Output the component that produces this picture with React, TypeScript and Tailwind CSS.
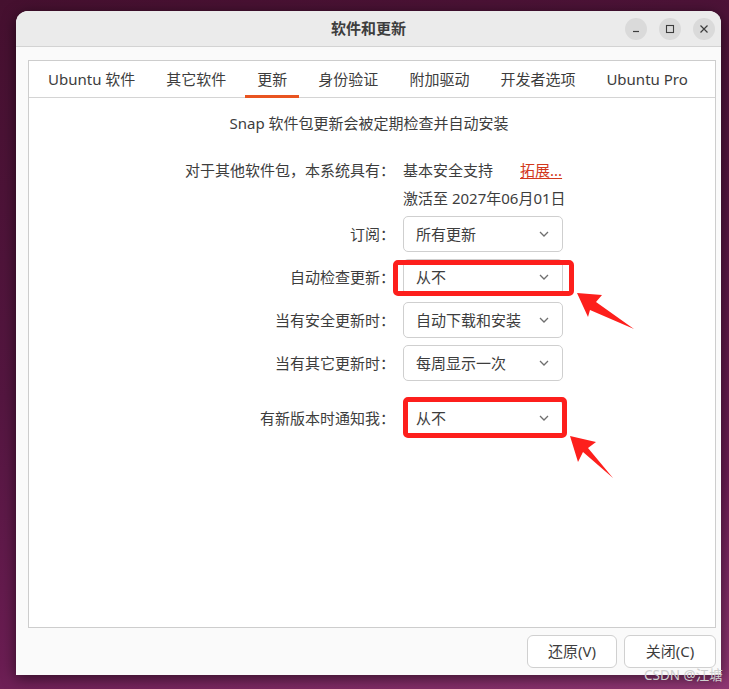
import React from 'react';

const font = {
  fontFamily: '"Noto Sans", "Noto Sans CJK SC", sans-serif',
};

const tabs = ['Ubuntu 软件', '其它软件', '更新', '身份验证', '附加驱动', '开发者选项', 'Ubuntu Pro'];

function Chevron() {
  return (
    <svg width="12" height="8" viewBox="0 0 12 8" className="text-[#6f6f6f]">
      <path d="M2 2l4 4 4-4" fill="none" stroke="currentColor" strokeWidth="1.3" />
    </svg>
  );
}

function Combo({ value }: { value: string }) {
  return (
    <div className="w-[160px] h-[36px] flex items-center justify-between pl-[12px] pr-[12px] bg-white border border-[#cfcfcf] rounded-[5px]">
      <span>{value}</span>
      <Chevron />
    </div>
  );
}

function Row({ label, children, className = '' }: { label: string; children: React.ReactNode; className?: string }) {
  return (
    <div className={`flex items-center ${className}`}>
      <div className="w-[366px] text-right">{label}</div>
      <div className="ml-[8px]">{children}</div>
    </div>
  );
}

export default function App() {
  return (
    <div
      className="relative w-[729px] h-[689px] overflow-hidden pt-[11px] pl-[16px] bg-[linear-gradient(165deg,#45102f_0%,#541640_45%,#6a1d52_75%,#8e3672_100%)] text-[#3d3d3d] text-[15px]"
      style={font}
    >
      <div className="w-[705px] h-[664px] flex flex-col rounded-t-[12px] bg-[#fafafa] shadow-[0_3px_14px_rgba(0,0,0,0.55)]">
        {/* title bar */}
        <div className="h-[36px] shrink-0 grid grid-cols-[1fr_auto_1fr] items-center bg-[#ebebeb] rounded-t-[12px] border-b border-[#d3d3d3]">
          <div />
          <div className="font-bold">软件和更新</div>
          <div className="flex justify-end items-center gap-[12px] pr-[6px]">
            <span className="w-[22px] h-[22px] rounded-full bg-[#dadada] flex items-center justify-center">
              <svg width="10" height="10" viewBox="0 0 10 10">
                <path d="M2 7.5h6" stroke="#3d3d3d" strokeWidth="1.2" />
              </svg>
            </span>
            <span className="w-[22px] h-[22px] rounded-full bg-[#dadada] flex items-center justify-center">
              <svg width="10" height="10" viewBox="0 0 10 10">
                <rect x="1.5" y="1.5" width="7" height="7" fill="none" stroke="#3d3d3d" strokeWidth="1.1" />
              </svg>
            </span>
            <span className="w-[22px] h-[22px] rounded-full bg-[#dadada] flex items-center justify-center">
              <svg width="10" height="10" viewBox="0 0 10 10">
                <path d="M1.5 1.5l7 7M8.5 1.5l-7 7" stroke="#3d3d3d" strokeWidth="1.2" />
              </svg>
            </span>
          </div>
        </div>

        {/* body */}
        <div className="flex-1 flex flex-col pl-[12px] pr-[5px] pt-[13px] pb-[7px]">
          <div className="flex-1 flex flex-col bg-white border border-[#cdcdcd]">
            <div className="h-[37px] shrink-0 flex items-stretch pl-[7px] gap-[7px] border-b border-[#d4d4d4]">
              {tabs.map((t) => (
                <div key={t} className="relative flex items-center px-[12px]">
                  {t}
                  {t === '更新' && (
                    <span className="absolute left-0 right-0 bottom-[-1px] h-[3px] bg-[#e95420]" />
                  )}
                </div>
              ))}
            </div>

            <div className="flex flex-col">
              <div className="mt-[15px] leading-[20px] text-center pr-[6px]">Snap 软件包更新会被定期检查并自动安装</div>

              <Row label="对于其他软件包，本系统具有：" className="mt-[27px] leading-[20px]">
                <div className="flex">
                  <span>基本安全支持</span>
                  <span className="ml-[27px] text-[#d2381d] underline underline-offset-2">拓展...</span>
                </div>
              </Row>
              <Row label="" className="mt-[8px] leading-[20px]">
                激活至 2027年06月01日
              </Row>

              <Row label="订阅：" className="mt-[8px]">
                <Combo value="所有更新" />
              </Row>
              <Row label="自动检查更新：" className="mt-[7px]">
                <Combo value="从不" />
              </Row>
              <Row label="当有安全更新时：" className="mt-[7px]">
                <Combo value="自动下载和安装" />
              </Row>
              <Row label="当有其它更新时：" className="mt-[7px]">
                <Combo value="每周显示一次" />
              </Row>
              <Row label="有新版本时通知我：" className="mt-[19px]">
                <Combo value="从不" />
              </Row>
            </div>
          </div>

          <div className="shrink-0 flex justify-end gap-[7px] mt-[7px]">
            <button className="w-[90px] h-[33px] bg-white border border-[#d0d0d0] rounded-[6px]">还原(V)</button>
            <button className="w-[92px] h-[33px] bg-white border border-[#d0d0d0] rounded-[6px]">关闭(C)</button>
          </div>
        </div>
      </div>

      {/* annotations */}
      <div className="absolute left-[393px] top-[260px] w-[181px] h-[36px] border-[5px] border-[#fd1f1c] rounded-[5px]" />
      <div className="absolute left-[403px] top-[397px] w-[164px] h-[41px] border-[5px] border-[#fd1f1c] rounded-[5px]" />
      <svg className="absolute left-0 top-0 pointer-events-none" width="729" height="689">
        <polygon points="577,293 602,295 596,302 634,329 590,310 588,317" fill="#fd1f1c" />
        <polygon points="570,436 596,442 588,448 613,478 583,452 578,462" fill="#fd1f1c" />
      </svg>

      <div className="absolute left-[644px] top-[667px] text-[13.5px] leading-[16px] text-[#cfcfcf]">CSDN @江塘</div>
    </div>
  );
}
